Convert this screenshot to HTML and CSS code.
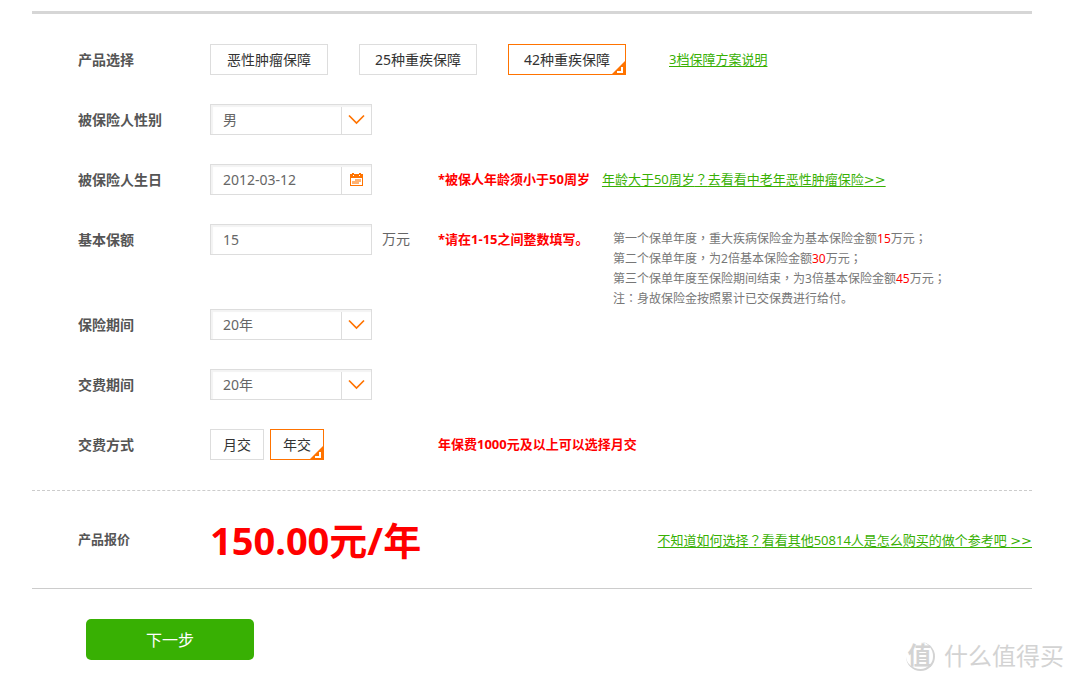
FILE: index.html
```html
<!DOCTYPE html>
<html lang="zh-CN">
<head>
<meta charset="utf-8">
<title>保险产品选择</title>
<link rel="stylesheet" href="styles.css">
</head>
<body>
<svg class="defs" aria-hidden="true">
  <symbol id="corner" viewBox="0 0 15 15"><path d="M0 15L15 0V15z" fill="#ff7300"/><path d="M10 7h2v6H6v-2h4z" fill="#fff"/></symbol>
  <symbol id="chevron" viewBox="0 0 17 11"><path d="M1 1.5l7.5 7.5L16 1.5" fill="none" stroke="#ff7300" stroke-width="1.7"/></symbol>
</svg>
<form class="quote">
  <div class="rows">
    <div class="row">
      <span class="label" id="product">产品选择</span>
      <div class="options" role="group" aria-labelledby="product">
        <button type="button" class="option wide">恶性肿瘤保障</button>
        <button type="button" class="option wide">25种重疾保障</button>
        <button type="button" class="option wide selected" aria-pressed="true">42种重疾保障<svg class="corner"><use href="#corner"/></svg></button>
      </div>
      <a class="link plan-link" href="#plans">3档保障方案说明</a>
    </div>
    <div class="row">
      <label class="label" for="gender">被保险人性别</label>
      <div class="control"><div class="field"><select id="gender"><option>男</option><option>女</option></select><span class="addon"><svg class="chevron"><use href="#chevron"/></svg></span></div></div>
    </div>
    <div class="row">
      <label class="label" for="birthday">被保险人生日</label>
      <div class="control"><div class="field"><input id="birthday" type="text" value="2012-03-12"><span class="addon"><svg class="calendar" viewBox="0 0 13 13"><path d="M0 1h2V0h2v1h5V0h2v1h2v12H0z" fill="#ff7300"/><path d="M1 5h11v7H1z" fill="#fff"/><path d="M5 6h6v2H5zM2 8h9v1H2zM2 9h7v2H2z" fill="#ff7300" opacity=".55"/><path d="M3 2h1v1H3zM9 2h1v1H9z" fill="#fff"/></svg></span></div></div>
      <div class="notes"><strong class="note">*被保人年龄须小于50周岁</strong><a class="link" href="#senior">年龄大于50周岁<span class="mark" lang="zh-TW">？</span>去看看中老年恶性肿瘤保险<span class="more">&gt;&gt;</span></a></div>
    </div>
    <div class="row explained">
      <label class="label" for="amount">基本保额</label>
      <div class="control"><div class="field"><input id="amount" type="text" value="15"></div><span class="unit">万元</span></div>
      <div class="notes"><strong class="note note-column">*请在1-15之间整数填写。</strong>
        <p class="description">第一个保单年度<span class="mark" lang="zh-TW">，</span>重大疾病保险金为基本保险金额<em>15</em>万元<span class="mark" lang="zh-TW">；</span><br>第二个保单年度<span class="mark" lang="zh-TW">，</span>为2倍基本保险金额<em>30</em>万元<span class="mark" lang="zh-TW">；</span><br>第三个保单年度至保险期间结束<span class="mark" lang="zh-TW">，</span>为3倍基本保险金额<em>45</em>万元<span class="mark" lang="zh-TW">；</span><br>注<span class="mark" lang="zh-TW">：</span>身故保险金按照累计已交保费进行给付。</p>
      </div>
    </div>
    <div class="row">
      <label class="label" for="term">保险期间</label>
      <div class="control"><div class="field"><select id="term"><option>20年</option></select><span class="addon"><svg class="chevron"><use href="#chevron"/></svg></span></div></div>
    </div>
    <div class="row">
      <label class="label" for="payterm">交费期间</label>
      <div class="control"><div class="field"><select id="payterm"><option>20年</option></select><span class="addon"><svg class="chevron"><use href="#chevron"/></svg></span></div></div>
    </div>
    <div class="row">
      <span class="label" id="paymode">交费方式</span>
      <div class="control close" role="group" aria-labelledby="paymode">
        <button type="button" class="option">月交</button>
        <button type="button" class="option selected" aria-pressed="true">年交<svg class="corner"><use href="#corner"/></svg></button>
      </div>
      <div class="notes"><strong class="note">年保费1000元及以上可以选择月交</strong></div>
    </div>
  </div>
  <div class="price-row">
    <span class="label price-label">产品报价</span>
    <strong class="price">150.00元/年</strong>
    <a class="link help" href="#reference">不知道如何选择<span class="mark" lang="zh-TW">？</span>看看其他50814人是怎么购买的做个参考吧 <span class="more">&gt;&gt;</span></a>
  </div>
  <button type="submit" class="next">下一步</button>
</form>
<div class="watermark"><span class="seal">值</span><span>什么值得买</span></div>
</body>
</html>
```
FILE: styles.css
```css
* { box-sizing: border-box; }
body {
  margin: 0;
  padding: 11px 41px 0 32px;
  background: #fff;
  color: #666;
  font: 14px/31px "Noto Sans", "Noto Sans CJK SC", sans-serif;
}
button, input, select { font: inherit; color: inherit; }
.defs { display: none; }
.rows {
  border-top: 3px solid #d6d6d6;
  border-bottom: 1px dashed #ccc;
  padding: 30px 0 1px 46px;
}
.row { display: flex; padding-bottom: 29px; }
.row.explained { padding-bottom: 0; }
.label { flex: 0 0 132px; font-weight: bold; color: #555; }
.options { display: flex; gap: 31px; }
.option {
  position: relative;
  height: 31px;
  min-width: 54px;
  padding: 0;
  border: 1px solid #ddd;
  background: #fff;
  color: #333;
  line-height: 29px;
  white-space: nowrap;
}
.option.wide { min-width: 118px; }
.option.selected { border-color: #ff7300; }
.corner { position: absolute; right: -1px; bottom: -1px; width: 15px; height: 15px; }
.link { color: #38b003; font-size: 13px; line-height: 30px; white-space: nowrap; text-underline-offset: 2px; }
.mark { font-family: "Noto Sans CJK TC", sans-serif; line-height: 1; }
.more { font-family: "DejaVu Sans", sans-serif; line-height: 1; }
.plan-link { margin-left: 43px; }
.control { display: flex; flex: 0 0 228px; gap: 10px; }
.control.close { gap: 6px; }
.field {
  display: grid;
  grid-template-columns: 1fr 30px;
  width: 162px;
  height: 31px;
  border: 1px solid #ddd;
  box-shadow: inset 2px 2px 1px #f3f3f3;
}
.field select, .field input {
  grid-area: 1 / 1 / 2 / 3;
  width: 100%;
  height: 29px;
  padding: 0 12px;
  border: 0;
  border-radius: 0;
  background: transparent;
  line-height: 29px;
  appearance: none;
  outline: 0;
}
.addon {
  grid-area: 1 / 2;
  display: flex;
  align-items: center;
  justify-content: center;
  margin-top: 2px;
  padding-bottom: 2px;
  border-left: 1px solid #ddd;
  pointer-events: none;
}
.chevron { width: 17px; height: 11px; }
.calendar { width: 13px; height: 13px; }
.unit { line-height: 30px; }
.notes { display: flex; gap: 12px; }
.note { color: #f00; font-size: 13px; line-height: 30px; white-space: nowrap; }
.note-column { flex: 0 0 163px; }
.description { margin: 0; padding-top: 5px; font-size: 12px; line-height: 20px; color: #777; white-space: nowrap; }
.description em { color: #f00; font-style: normal; }
.price-row {
  display: flex;
  align-items: center;
  height: 98px;
  padding-left: 46px;
  border-bottom: 1px solid #ccc;
}
.price-label { font-size: 13px; }
.price { color: #f00; font-size: 38px; line-height: 48px; white-space: nowrap; }
.help { margin-left: auto; }
.next {
  display: block;
  width: 168px;
  height: 41px;
  margin: 30px 0 0 54px;
  padding: 2px 0 0;
  border: 0;
  border-radius: 5px;
  background: #38b003;
  color: #fff;
  font-size: 16px;
}
.watermark {
  position: absolute;
  right: 9px;
  bottom: 10px;
  display: flex;
  align-items: center;
  gap: 9px;
  color: #d3d3d3;
  font-size: 24px;
  line-height: 32px;
}
.seal {
  width: 29px;
  height: 29px;
  border-right: 2px solid #d3d3d3;
  border-bottom: 2px solid #d3d3d3;
  border-radius: 50%;
  font-weight: bold;
  line-height: 26px;
  text-align: center;
}
```
